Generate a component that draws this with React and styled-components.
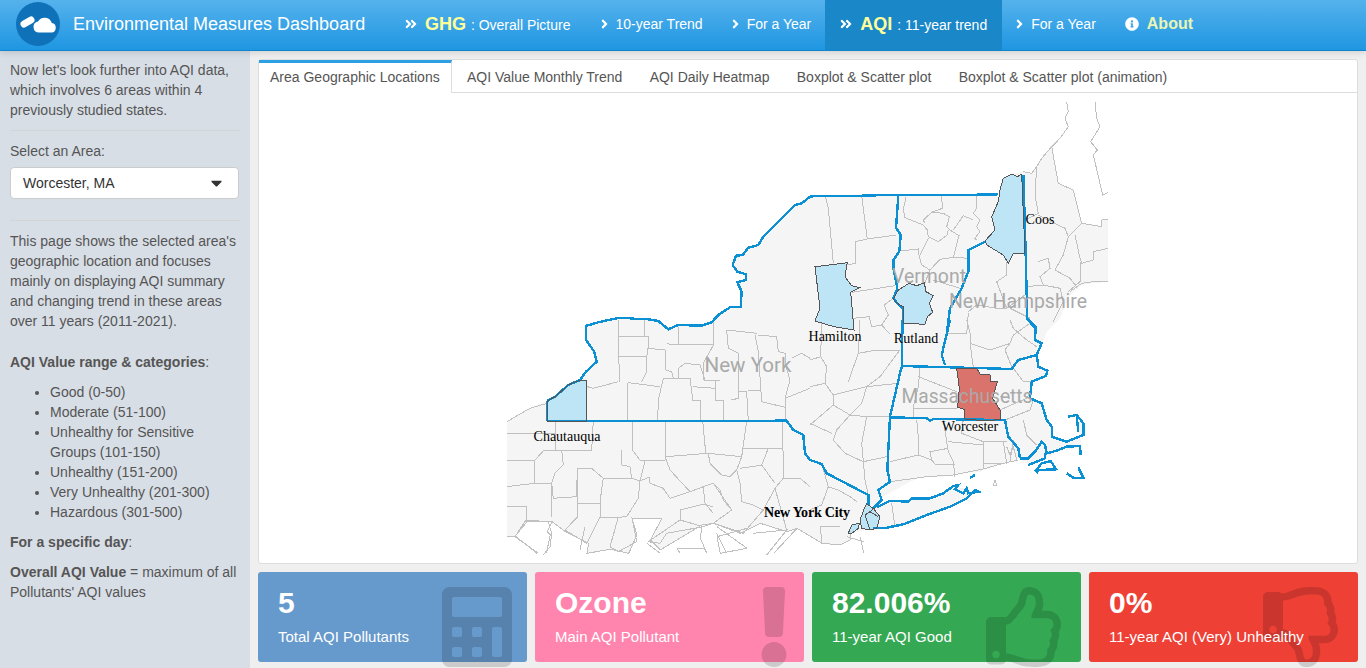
import React from "react";
import styled, { createGlobalStyle } from "styled-components";
import {
  FaAngleDoubleRight,
  FaAngleRight,
  FaCalculator,
  FaCaretDown,
  FaExclamation,
  FaInfoCircle,
  FaRegThumbsDown,
  FaRegThumbsUp,
} from "react-icons/fa";

// map points were read off 3x crops, so every run keeps its crop origin
const pts = (ox, oy, str) =>
  str
    .trim()
    .split(/\s+/)
    .map((pair) => {
      const [x, y] = pair.split(",").map(Number);
      return `${(ox + x / 3).toFixed(1)},${(oy + y / 3).toFixed(1)}`;
    })
    .join(" ");

const A = (s) => pts(500, 95, s);
const B = (s) => pts(810, 95, s);
const C = (s) => pts(500, 320, s);
const D = (s) => pts(810, 320, s);
const E = (s) => pts(507, 490, s);
const F = (s) => pts(860, 430, s);

const lakeShore = [
  C("141,243 165,230 205,195 240,180 258,155 290,125 283,95 258,60 258,22"),
  A("260,692 295,682 325,675 355,669 390,670 410,672 445,673 475,678 505,703 535,690 605,692 635,682 655,660 693,635 722,635 725,590 712,562 738,555 738,538 712,530 698,510 708,482 728,480 745,458 775,450 790,425 860,355 885,330 905,325 930,305"),
  B("0,305 20,302 155,302 265,299 500,299 565,298"),
].join(" ");

const southEdge = "1030,130 1030,150 1000,165 945,160 870,115 840,125 760,100 700,130 620,100 585,105 460,180 430,150 465,85 420,85 375,85 390,135 365,190 310,178 240,190 245,160 175,125 135,95 60,95 25,138 0,138";

const land = [
  "507,422 530,408 547,401",
  lakeShore,
  "1000,188 1003,178 1012,174 1023,172 1032,173 1037,167 1042,158 1052,147 1058,183 1073,190 1082,223 1102,227 1102,220 1108,219 1108,282 1093,283 1082,285 1070,295 1060,318 1048,330 1042,343 1037,355",
  D("685,140 712,152 708,168 665,185 660,235 695,250 710,300 725,320 725,350 770,365 820,345 820,310 800,285 815,380 740,395 700,420 660,435 630,415"),
  F("430,100 360,125 300,130 245,140 185,140 150,155 105,180 60,205 50,232 90,212 145,215 155,205 210,205 250,190 280,168 355,185 320,205 270,230 200,255 130,283 80,293 40,293 20,300"),
  E(southEdge),
].join(" ");

const countyLines = [
  // lower New York and Pennsylvania
  ...[
    "355,0 358,185", "433,0 433,50", "358,50 445,50 445,80 440,110 440,155 425,185", "358,110 440,110",
    "355,185 280,205 262,200", "383,188 383,303", "385,188 480,200", "490,175 570,175 578,240 600,240 602,303",
    "490,175 475,240 473,303", "445,85 495,90 498,150 515,155 520,175", "500,70 515,75 640,72", "535,20 535,72",
    "640,0 642,72 610,130 612,180 660,182", "535,175 535,145 555,130 600,135 615,180",
    "578,200 645,205 645,240 670,240 670,303", "645,180 645,205", "715,165 717,235 692,240", "717,215 780,210",
    "740,215 745,303", "680,30 770,40", "680,30 685,85 715,100 715,165", "765,45 775,95 785,245 855,262 855,303",
    "775,45 830,50 835,95 855,100 855,130 870,180 855,235 855,262", "855,235 930,205", "875,115 905,100 930,115",
    "167,303 167,390", "280,303 275,390 185,390 130,393 105,420 20,420", "20,340 165,340", "20,305 90,265 141,250",
    "397,303 397,390 420,420 495,422 497,303", "497,410 625,400 725,410 740,303", "608,303 617,398",
    "725,385 848,385", "848,303 850,475", "105,420 103,490 20,500", "103,490 155,490 155,590",
    "185,390 190,435 165,460 155,490", "155,490 160,535 228,530 233,445 275,445 310,475 300,545 300,590",
    "233,550 300,550", "233,445 233,590 195,630 260,670 300,592", "20,560 78,560 78,600 145,605",
    "20,650 45,650 78,600", "45,650 115,700", "145,605 155,640 150,680", "300,592 355,592 330,680",
    "365,390 365,435 390,440 395,475 310,475", "395,475 420,483 415,535 380,590 355,592",
    "420,483 447,472 450,490 490,505 510,535 570,515 610,500 640,490 695,570 640,610 610,620 540,600 540,570 610,553 640,560",
    "435,422 420,483", "497,415 510,450 570,515", "625,400 630,430 665,465 690,470 710,450 725,410",
    "710,450 720,490 725,545 760,555 790,570 825,505 850,475 900,475", "790,435 720,445", "805,385 785,435 825,490",
    "610,500 615,550 640,580", "640,490 660,510 670,540 695,570", "540,600 445,665 480,670 500,640 610,620",
    "395,590 410,665 355,695 330,680", "640,610 730,640 790,570", "650,640 680,700", "760,640 860,630 800,705",
    "860,630 825,505", "900,475 930,500",
  ].map(C),
  // upstate, Vermont, New Hampshire, Maine
  ...[
    "45,300 55,340 70,505", "155,302 172,432", "135,440 172,432 258,420", "135,440 135,505 112,510", "125,592 255,572",
    "250,610 222,630 235,660 215,690 185,695 178,665 130,670", "215,690 240,718",
    "288,305 280,345 285,368 340,390 352,405 355,425 385,440 412,420 415,405", "395,302 397,340 365,352 340,375 345,385",
    "365,352 400,355 418,365 410,395 420,405 447,422 430,487 475,490", "500,302 500,340 490,355 510,375 500,395 510,410 495,430 500,435",
    "460,362 490,375", "460,362 430,405", "355,430 328,485 335,510 360,525 390,493 430,487", "268,468 325,462 328,485",
    "360,525 345,563", "370,555 450,580", "590,500 590,540 560,560 575,600 590,640", "475,650 500,630 560,640 590,640 645,600",
    "470,718 475,655", "600,640 660,670", "640,230 665,235 680,215 695,190 725,155 745,265 790,285 815,385 875,395 875,375 895,372",
    "680,215 675,300 685,355 645,375", "685,360 765,400 775,425 815,385", "775,425 760,480 735,525 780,550 800,575",
    "795,420 810,490 815,505 850,495 850,470 895,460", "685,500 715,490 720,520 690,545 700,570 650,575",
    "700,570 750,580 760,620 730,680", "810,500 810,560 775,590", "780,590 815,565 850,560 895,560",
    "770,20 775,50 765,70 775,95 750,130 725,155", "855,20 860,70 870,95 842,140 862,165 850,180 878,300 895,292",
  ].map(B),
  // Hudson valley, Massachusetts, Connecticut, Rhode Island
  ...[
    "470,0 480,40 480,70 540,90 600,70 610,45 660,10", "600,70 585,90 605,140", "480,70 490,140", "600,0 610,25 650,60 680,80",
    "415,40 470,40", "35,0 32,110 0,120", "32,110 50,140 45,190 0,200", "45,190 70,225 70,255 120,285 170,290 240,290",
    "70,225 170,200 265,190", "150,0 145,100 200,90 270,90 210,170 170,200 155,250 120,285", "145,100 115,185",
    "70,255 0,315", "120,285 80,330 70,360 105,400 160,425", "170,290 155,370 160,425 165,480 175,525", "65,340 0,310",
    "35,430 55,500 85,510 120,530 140,545", "160,425 230,410", "55,500 35,555 0,570", "330,145 325,200 310,260 310,290",
    "325,170 440,215", "310,265 440,265", "570,270 650,235 660,215", "610,145 640,185 665,185", "570,230 600,235",
    "585,300 660,270 670,240", "640,300 650,345 680,375", "400,300 415,395 430,425 435,470",
    "320,300 325,350 325,405 365,420 360,395 415,385", "325,405 240,425", "365,420 375,432 435,435", "415,365 520,375",
    "460,297 455,340 520,365", "520,365 520,445", "520,365 590,365", "520,430 580,430", "580,365 590,430 600,425 610,360",
    "590,380 600,405 610,380 620,420", "240,485 350,470 430,465 520,447 580,430 625,420",
  ].map(D),
  ...["255,620 240,690", "150,680 130,705"].map(C),
  ...[
    southEdge, "630,110 720,175", "870,115 800,190", "945,160 940,110 1000,110", "1060,140 1070,190", "420,160 460,190",
    "520,190 510,175 590,175 600,190", "25,138 90,190", "135,95 120,125 130,135 118,190", "585,105 580,145 600,190",
    "630,140 640,190", "630,140 720,115", "720,175 640,190", "1020,140 1070,155",
  ].map(E),
  F("95,220 105,290"),
  F("400,165 405,150 410,165 400,165"),
];

const stateBorders = [
  C("141,303 141,243"),
  lakeShore,
  [B("265,300 262,345 258,398 272,420 268,470 250,495 250,520 262,580 250,610 262,625 278,640 278,718"), D("276,0 276,140 272,150 240,290 232,450 240,485 205,510 215,540 190,565")].join(" "),
  [C("141,303 860,302 880,330 910,345 915,400 930,420"), D("0,420 35,432 50,460 175,525 175,555")].join(" "),
  [B("525,440 475,465 475,530 455,580 420,640 410,718"), D("420,0 395,105 405,135")].join(" "),
  B("640,240 645,400 650,600 650,670 678,695 678,718"),
  D("655,0 675,25 675,60 695,70 680,105"),
  D("276,138 605,147 625,120 680,105 685,140 712,152 708,168 665,185 660,235 695,250 710,300 725,320 725,350 770,365 820,345 820,310 800,285 775,290"),
  D("800,290 805,335"),
  D("240,292 350,295 360,302 370,297 585,300 595,350 625,385 630,415"),
  F("480,85 505,85 525,65 545,35 555,45 560,70 590,62 620,50 660,48 662,75"),
  F("505,105 555,85 555,70"),
  F("525,125 545,100 572,93 588,118 535,120 530,130"),
  F("620,130 640,143 670,143 655,112"),
  F("330,143 345,135"),
  F("50,232 90,212 145,215 155,205 210,205 250,190 280,168 295,165 285,178 310,190 320,175 325,190 355,185 345,180 320,205 270,230 200,255 130,283 80,293 40,293"),
];

const areas = [
  { fill: "#bde5f5", points: B("15,515 112,503 105,545 125,572 150,578 122,592 132,705 72,695 15,678 30,640") },
  { fill: "#bde5f5", points: B("265,585 297,565 320,572 343,563 348,590 370,602 358,625 368,652 352,665 345,688 280,685 280,635 262,625 250,612") },
  { fill: "#bde5f5", points: B("570,285 580,250 605,237 622,245 635,237 645,475 610,475 595,505 580,480 530,450 525,438 555,405 545,365 565,320") },
  { fill: "#bde5f5", points: C("141,303 141,243 165,230 205,195 240,180 260,182 260,303") },
  { fill: "#da736b", points: D("440,145 500,145 510,162 540,165 540,185 562,185 548,235 570,270 570,298 530,303 465,297 462,268 443,262 448,205") },
  { fill: "#bde5f5", points: D("170,552 190,565 210,590 200,625 180,630 155,625 150,600 165,560") },
  { fill: "#bde5f5", points: D("115,640 125,615 148,610 145,625 125,640") },
];

const boroughLines = [D("165,585 180,575 205,590"), D("178,578 190,565"), D("165,585 180,630"), D("186,565 196,565")];

const stateLabels = [
  { name: "New York", x: 748, y: 372, width: 87 },
  { name: "Vermont", x: 929, y: 283, width: 74 },
  { name: "New Hampshire", x: 1018, y: 308, width: 138 },
  { name: "Massachusetts", x: 967, y: 403, width: 131 },
];

const countyLabels = [
  { name: "Coos", x: 1040, y: 224 },
  { name: "Hamilton", x: 835, y: 341 },
  { name: "Rutland", x: 916, y: 343 },
  { name: "Chautauqua", x: 567, y: 441 },
  { name: "Worcester", x: 970, y: 431 },
];

const tabs = [
  "Area Geographic Locations",
  "AQI Value Monthly Trend",
  "AQI Daily Heatmap",
  "Boxplot & Scatter plot",
  "Boxplot & Scatter plot (animation)",
];

const aqiRanges = [
  "Good (0-50)",
  "Moderate (51-100)",
  "Unhealthy for Sensitive Groups (101-150)",
  "Unhealthy (151-200)",
  "Very Unhealthy (201-300)",
  "Hazardous (301-500)",
];

const stats = [
  { value: "5", label: "Total AQI Pollutants", color: "#6699cc", Icon: FaCalculator, iconWidth: 70 },
  { value: "Ozone", label: "Main AQI Pollutant", color: "#ff85af", Icon: FaExclamation, iconWidth: 30 },
  { value: "82.006%", label: "11-year AQI Good", color: "#34a853", Icon: FaRegThumbsUp, iconWidth: 80 },
  { value: "0%", label: "11-year AQI (Very) Unhealthy", color: "#ee4035", Icon: FaRegThumbsDown, iconWidth: 80 },
];

const GlobalStyle = createGlobalStyle`
  html, body {
    margin: 0;
    height: 100%;
    overflow: hidden;
  }
  body {
    font-family: "Liberation Sans", Arial, sans-serif;
    font-size: 14px;
    line-height: 20px;
    color: #555;
    background: #eee;
  }
  * {
    box-sizing: border-box;
  }
`;

const Page = styled.div`
  width: 1366px;
  height: 668px;
  overflow: hidden;
  background: #efefef;
`;

const Header = styled.header`
  position: relative;
  z-index: 2;
  display: flex;
  height: 51px;
  color: #fff;
  background: linear-gradient(to bottom, #55b2ec, #1f96e2);
  border-bottom: 1px solid #0f86cc;
  box-shadow: 0 2px 6px rgba(0, 0, 0, 0.12);
`;

const Brand = styled.div`
  display: flex;
  align-items: center;
  width: 390px;
  padding: 0 0 2px 16px;
  font-size: 18px;
`;

const Logo = styled.span`
  display: flex;
  align-items: center;
  justify-content: center;
  width: 44px;
  height: 44px;
  margin-right: 13px;
  border-radius: 50%;
  background: #0f72b9;
`;

const Nav = styled.nav`
  display: flex;
`;

const NavItem = styled.a`
  display: flex;
  align-items: center;
  gap: 8px;
  padding: 0 ${(p) => (p.$tight ? "14px" : "15px")} 2px;
  font-size: 14px;
  color: #fff;
  background: ${(p) => (p.$active ? "#1a87c9" : "transparent")};
`;

const SingleArrow = styled(FaAngleRight)`
  flex: none;
  width: 7px;
  height: 14px;
`;

const DoubleArrow = styled(FaAngleDoubleRight)`
  flex: none;
  width: 12px;
  height: 14px;
`;

const InfoIcon = styled(FaInfoCircle)`
  flex: none;
  width: 14px;
  height: 14px;
`;

const Accent = styled.b`
  margin-right: 1px;
  font-size: 18px;
  color: #ffff99;
`;

const AboutText = styled.b`
  font-size: 16px;
  color: #e8f5b5;
`;

const Main = styled.div`
  display: flex;
  height: 617px;
`;

const Sidebar = styled.aside`
  flex: none;
  width: 250px;
  padding: 9px 10px 0;
  background: #d8dee6;
`;

const Para = styled.p`
  margin: 0 0 10px;
  ${(p) => p.$spaced && "margin-top: 21px;"}
`;

const Rule = styled.hr`
  height: 1px;
  margin: 10px 0;
  border: 0;
  background: #d2d4d8;
`;

const SelectLabel = styled.div`
  margin-bottom: 6px;
`;

const SelectBox = styled.div`
  display: flex;
  align-items: center;
  justify-content: space-between;
  width: 229px;
  height: 32px;
  margin-bottom: 21px;
  padding: 0 12px;
  color: #333;
  background: #fff;
  border: 1px solid #ccc;
  border-radius: 4px;
`;

const SelectCaret = styled(FaCaretDown)`
  width: 11px;
  height: 18px;
  margin-right: 4px;
  color: #333;
`;

const RangeList = styled.ul`
  margin: 0 0 10px;
  padding-left: 40px;
`;

const Content = styled.main`
  flex: 1;
  min-width: 0;
  padding: 8px 8px 0;
`;

const TabCard = styled.section`
  height: 505px;
  background: #fff;
  border: 1px solid #ddd;
  border-radius: 3px;
`;

const TabBar = styled.div`
  display: flex;
  gap: 5.3px;
  height: 33px;
  border-bottom: 1px solid #ddd;
`;

const Tab = styled.a`
  height: ${(p) => (p.$active ? "33px" : "32px")};
  padding: 0 11px;
  line-height: ${(p) => (p.$active ? "28px" : "34px")};
  background: #fff;
  border-top: ${(p) => (p.$active ? "3px solid #2d9fe3" : "0")};
  border-right: ${(p) => (p.$active ? "1px solid #ddd" : "0")};
  margin-right: ${(p) => (p.$active ? "-1px" : "0")};
`;

const MapSvg = styled.svg`
  display: block;
`;

const StateName = styled.text`
  font-family: Roboto, "Liberation Sans", sans-serif;
  font-size: 20px;
  fill: #a9a9a9;
  text-anchor: middle;
`;

const CountyName = styled.text`
  font-family: "Liberation Serif", serif;
  font-size: 14px;
  fill: #000;
  text-anchor: middle;
  font-weight: ${(p) => (p.$bold ? 700 : 400)};
`;

const StatRow = styled.div`
  display: grid;
  grid-template-columns: repeat(4, 269px);
  gap: 8px;
  margin-top: 8px;
`;

const StatCard = styled.div`
  position: relative;
  height: 90px;
  padding: 14px 20px 0;
  color: #fff;
  background: ${(p) => p.$color};
  border-radius: 3px;
`;

const StatValue = styled.div`
  font-size: 30px;
  font-weight: 700;
  line-height: 33px;
  margin-bottom: 8px;
`;

const StatLabel = styled.div`
  position: relative;
  z-index: 1;
  font-size: 15px;
`;

const StatIcon = styled.span`
  position: absolute;
  top: 15px;
  right: 15px;
  display: block;
  width: ${(p) => p.$width}px;
  height: 80px;
  color: rgba(0, 0, 0, 0.15);
  svg {
    display: block;
    width: 100%;
    height: 100%;
  }
`;

function CloudLogo() {
  return (
    <Logo>
      <svg width="36" height="18" viewBox="0 0 36 18">
        <line x1="4" y1="9" x2="11" y2="5" stroke="#fff" strokeWidth="7" strokeLinecap="round" />
        <path
          d="M19 17.5a5.5 5.5 0 0 1-1-10.9a7.5 7.5 0 0 1 13.8 1.4a4.8 4.8 0 0 1-.3 9.5z"
          fill="#fff"
          stroke="#0f72b9"
          strokeWidth="1.5"
          paintOrder="stroke"
        />
      </svg>
    </Logo>
  );
}

export default function App() {
  return (
    <Page>
      <GlobalStyle />
      <Header>
        <Brand>
          <CloudLogo />
          Environmental Measures Dashboard
        </Brand>
        <Nav>
          <NavItem>
            <DoubleArrow />
            <span>
              <Accent>GHG</Accent> : Overall Picture
            </span>
          </NavItem>
          <NavItem>
            <SingleArrow />
            10-year Trend
          </NavItem>
          <NavItem $tight>
            <SingleArrow />
            For a Year
          </NavItem>
          <NavItem $active>
            <DoubleArrow />
            <span>
              <Accent>AQI</Accent> : 11-year trend
            </span>
          </NavItem>
          <NavItem $tight>
            <SingleArrow />
            For a Year
          </NavItem>
          <NavItem>
            <InfoIcon />
            <AboutText>About</AboutText>
          </NavItem>
        </Nav>
      </Header>
      <Main>
        <Sidebar>
          <Para>Now let's look further into AQI data, which involves 6 areas within 4 previously studied states.</Para>
          <Rule />
          <SelectLabel>Select an Area:</SelectLabel>
          <SelectBox>
            Worcester, MA
            <SelectCaret />
          </SelectBox>
          <Rule />
          <Para>
            This page shows the selected area's geographic location and focuses mainly on displaying AQI summary and
            changing trend in these areas over 11 years (2011-2021).
          </Para>
          <Para $spaced>
            <b>AQI Value range &amp; categories</b>:
          </Para>
          <RangeList>
            {aqiRanges.map((range) => (
              <li key={range}>{range}</li>
            ))}
          </RangeList>
          <Para>
            <b>For a specific day</b>:
          </Para>
          <Para>
            <b>Overall AQI Value</b> = maximum of all Pollutants' AQI values
          </Para>
        </Sidebar>
        <Content>
          <TabCard>
            <TabBar>
              {tabs.map((tab, i) => (
                <Tab key={tab} $active={i === 0}>
                  {tab}
                </Tab>
              ))}
            </TabBar>
            <MapSvg width="1098" height="470" viewBox="259 93 1098 470">
              <clipPath id="map-clip">
                <rect x="507" y="100" width="601" height="455" />
              </clipPath>
              <g clipPath="url(#map-clip)" shapeRendering="crispEdges">
                <polygon points={land} fill="#f5f5f5" />
                {countyLines.map((line, i) => (
                  <polyline key={i} points={line} fill="none" stroke="#c0c0c0" strokeWidth="1" />
                ))}
                {areas.map((area, i) => (
                  <polygon key={i} points={area.points} fill={area.fill} />
                ))}
                {stateBorders.map((line, i) => (
                  <polyline key={i} points={line} fill="none" stroke="#0b90d3" strokeWidth="2.4" />
                ))}
                {areas.map((area, i) => (
                  <polygon key={i} points={area.points} fill="none" stroke="#555" strokeWidth="1" />
                ))}
                {boroughLines.map((line, i) => (
                  <polyline key={i} points={line} fill="none" stroke="#555" strokeWidth="1" />
                ))}
              </g>
              {stateLabels.map((label) => (
                <StateName key={label.name} x={label.x} y={label.y} textLength={label.width} lengthAdjust="spacingAndGlyphs">
                  {label.name}
                </StateName>
              ))}
              {countyLabels.map((label) => (
                <CountyName key={label.name} x={label.x} y={label.y}>
                  {label.name}
                </CountyName>
              ))}
              <CountyName $bold x="807" y="517" textLength="86">
                New York City
              </CountyName>
            </MapSvg>
          </TabCard>
          <StatRow>
            {stats.map(({ value, label, color, Icon, iconWidth }) => (
              <StatCard key={label} $color={color}>
                <StatValue>{value}</StatValue>
                <StatLabel>{label}</StatLabel>
                <StatIcon $width={iconWidth}>
                  <Icon />
                </StatIcon>
              </StatCard>
            ))}
          </StatRow>
        </Content>
      </Main>
    </Page>
  );
}
